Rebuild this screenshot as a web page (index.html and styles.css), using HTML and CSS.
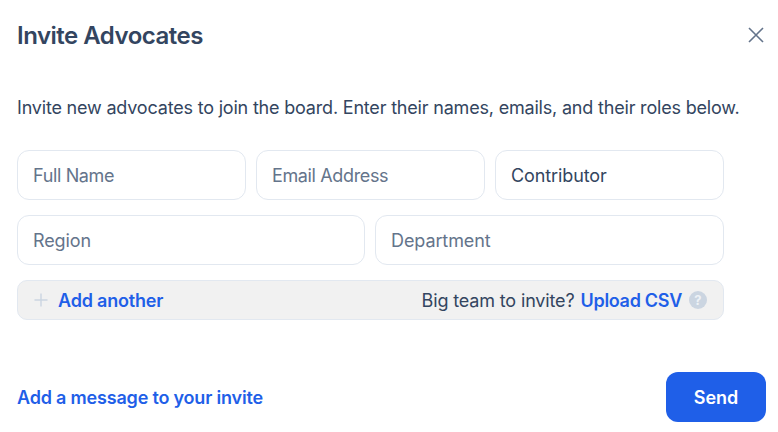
FILE: index.html
```html
<!DOCTYPE html>
<html lang="en">
<head>
<meta charset="utf-8">
<title>Invite Advocates</title>
<link rel="stylesheet" href="styles.css">
</head>
<body>
<main class="modal">
  <header class="head">
    <h1 class="title">Invite Advocates</h1>
    <button class="close" aria-label="Close">
      <svg width="16" height="16" viewBox="0 0 16 16" fill="none"><path d="M1 1l14 14M15 1L1 15" stroke="#64748b" stroke-width="1.6"/></svg>
    </button>
  </header>
  <p class="lead">Invite new advocates to join the board. Enter their names, emails, and their roles below.</p>
  <form class="form">
    <div class="row row-3">
      <div class="field ph tight">Full Name</div>
      <div class="field ph tight">Email Address</div>
      <div class="field val">Contributor</div>
    </div>
    <div class="row row-2">
      <div class="field ph">Region</div>
      <div class="field ph">Department</div>
    </div>
    <div class="bar">
      <div class="bar-left">
        <svg class="plus" width="14" height="14" viewBox="0 0 14 14" fill="none"><path d="M7 .5v13M.5 7h13" stroke="#cbd5e1" stroke-width="1.4"/></svg>
        <a class="link strong">Add another</a>
      </div>
      <div class="bar-right">
        <span class="hint">Big team to invite?</span>
        <a class="link upload">Upload CSV</a>
        <span class="help">?</span>
      </div>
    </div>
  </form>
  <footer class="foot">
    <a class="link strong">Add a message to your invite</a>
    <button class="send" type="button">Send</button>
  </footer>
</main>
</body>
</html>
```
FILE: styles.css
```css
* { box-sizing: border-box; }
html, body { margin: 0; background: #fff; }
body { width: 778px; height: 432px; overflow: hidden; font-family: Inter, "Liberation Sans", sans-serif; }
.modal { padding: 0 12px 10px 17px; height: 432px; display: flex; flex-direction: column; }
.head { display: flex; justify-content: space-between; align-items: center; height: 72px; }
.title { margin: 0; font-size: 24px; line-height: 32px; font-weight: 600; color: #334560; letter-spacing: -0.5px; }
.close { border: 0; padding: 0; background: none; width: 16px; height: 16px; margin-right: 2px; margin-top: -2px; display: block; }
.close svg { display: block; }
.lead { margin: 23px 0 0; font-size: 18px; line-height: 26px; color: #334560; white-space: nowrap; letter-spacing: -0.19px; }
.form { margin-top: 29px; width: 707px; display: flex; flex-direction: column; gap: 15px; }
.row { display: grid; gap: 10px; }
.row-3 { grid-template-columns: 229px 229px 229px; }
.row-2 { grid-template-columns: 348px 349px; }
.field { height: 50px; border: 1px solid #e2e8f0; border-radius: 12px; padding: 0 15px; display: flex; align-items: center; font-size: 18px; letter-spacing: -0.1px; }
.tight { letter-spacing: -0.36px; }
.ph { color: #64748b; }
.val { color: #334560; }
.bar { height: 40px; border: 1px solid #e2e8f0; border-radius: 10px; background: #f1f1f1; display: flex; justify-content: space-between; align-items: center; padding: 0 16px; font-size: 18px; }
.bar-left, .bar-right { display: flex; align-items: center; }
.plus { margin-right: 10px; }
.link { color: #1f5fe8; letter-spacing: -0.19px; }
.strong { font-weight: 600; }
.hint { color: #334560; letter-spacing: -0.15px; }
.upload { font-weight: 600; margin-left: 6px; letter-spacing: -0.3px; }
.help { width: 18px; height: 18px; border-radius: 50%; background: #cbd5e1; color: #eef2f6; font-size: 13px; font-weight: 700; display: flex; align-items: center; justify-content: center; margin-left: 7px; }
.foot { margin-top: auto; display: flex; justify-content: space-between; align-items: center; font-size: 18px; }
.send { width: 100px; height: 50px; border: 0; border-radius: 12px; background: #1f5fe8; color: #fff; font: 600 18px Inter, "Liberation Sans", sans-serif; }
```
